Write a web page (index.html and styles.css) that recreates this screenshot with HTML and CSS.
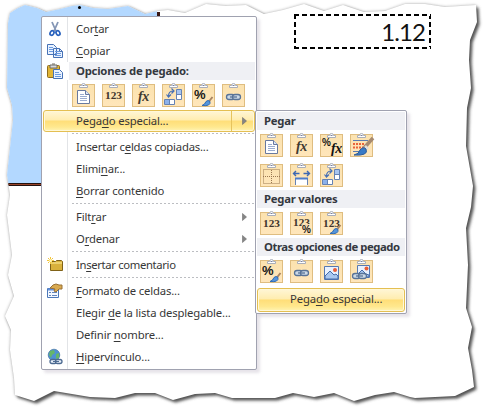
FILE: index.html
```html
<!DOCTYPE html>
<html lang="es">
<head>
<meta charset="utf-8">
<title>Pegado especial</title>
<link rel="stylesheet" href="styles.css">
</head>
<body>
<svg class="defs" width="0" height="0" aria-hidden="true">
  <defs>
    <linearGradient id="tan" x2="0" y2="1"><stop stop-color="#fbe2ae"/><stop offset="1" stop-color="#ffe6bb"/></linearGradient>
    <symbol id="clip" viewBox="0 0 24 24">
      <rect x=".5" y="1.500" width="22" height="22" fill="url(#tan)" stroke="#dfbd80"/>
      <path d="M7.500 4.500v-2h2q0-2 2-2t2 2h2v2z" fill="#fff" stroke="#a9adb9"/>
      <path d="M10.500 2.500h2" stroke="#77809c"/>
    </symbol>
    <symbol id="doc" viewBox="0 0 24 24">
      <path d="M5.500 7.500h8l4 4v9h-12z" fill="#fff" stroke="#68799f"/><path d="M13.500 7.500v4h4" fill="#dce5f6" stroke="#68799f"/>
      <path d="M8 11.500h4M8 13.500h7M8 15.500h7M8 17.500h7" stroke="#9bacd0"/>
    </symbol>
    <symbol id="brush" viewBox="0 0 24 24">
      <path d="M20.500 14l-4 5" stroke="#a98562" stroke-width="2"/><path d="M10 22.500q3-1 4-4 2-2 4 0 1 5-8 4z" fill="#5595dc" stroke="#2f6cb5"/>
    </symbol>
    <symbol id="transpose" viewBox="0 0 24 24">
      <path d="M14.500 6.500h5v10h-5z" fill="#fff" stroke="#6582b4"/><path d="M15 7h4v4h-4z" fill="#a7c4ef"/><path d="M14.500 11.500h5" stroke="#6582b4"/>
      <path d="M2.500 16.500h10v5h-10z" fill="#fff" stroke="#6582b4"/><path d="M3 17h4v4H3z" fill="#8cb1eb"/><path d="M7.500 17v4" stroke="#6582b4"/>
      <path d="M6.500 13q0-5 5-5M4.500 11.500l2 2.500 2.500-2.500M9.500 5.500l2.500 2.500-2.500 2.500" fill="none" stroke="#4770b5" stroke-width="1.200"/>
    </symbol>
    <symbol id="link" viewBox="0 0 24 24">
      <rect x="4.500" y="11.500" width="8" height="5" rx="2.500" fill="#cbd9e7" stroke="#587397" stroke-width="1.300"/>
      <rect x="10.500" y="11.500" width="8" height="5" rx="2.500" fill="#cbd9e7" stroke="#587397" stroke-width="1.300"/><path d="M8 14h7" stroke="#587397" stroke-width="1.300"/>
    </symbol>
    <symbol id="arrow" viewBox="0 0 5 8"><path d="M.5.5L4.500 4 .5 7.500z" fill="#858585" stroke="#6f6f6f" stroke-width=".6"/></symbol>
    <path id="sheet" d="M8 23L10 13 18 8 25 5 37 8 46 12 60 9 72 6 80 5 93 8 108 9 128 6 145 14 158 11 168 10 185 13 206 4 226 6 246 5 264 14 283 10 304 4 324 11 343 5 364 12 385 11 405 4 425 4 445 7 476 5 477 22 470 40 469 60 471 88 467 108 466 146 473 186 471 207 466 228 468 265 466 308 472 327 468 348 472 370 474 387 455 396 415 398 410 397 394 392 375 395 354 401 334 393 314 397 293 393 275 398 232 398 215 393 195 394 173 400 155 393 135 393 115 398 90 397 54 391 34 401 15 395 14 378 10 350 11 330 5 316 14 296 8 275 12 255 7 215 10 195 7 175 13 120 12 105 7 88z"/>
    <clipPath id="torn"><use href="#sheet"/></clipPath>
    <filter id="soft" x="-10%" y="-10%" width="120%" height="120%"><feGaussianBlur stdDeviation="1.800"/></filter>
  </defs>
</svg>
<main class="stage">
  <svg class="paper" viewBox="0 0 484 410" aria-hidden="true">
    <g fill="#555" filter="url(#soft)"><use href="#sheet" x="2.500" y="2.500"/></g>
    <g fill="#555" filter="url(#soft)" opacity=".5"><use href="#sheet"/></g>
    <g clip-path="url(#torn)">
      <path d="M0 0h484v410H0z" fill="#fff"/>
      <path d="M0 0h157v183H0z" fill="#b3d8ff"/>
      <path d="M0 184.500h60" stroke="#24120f" stroke-width="3"/><path d="M0 184.500h60" stroke="#984328"/>
      <path d="M158.500 12v5" stroke="#3a1713" stroke-width="3"/><path d="M6 28v14M6 70v12" stroke="#7c2620" stroke-width="2"/>
      <circle cx="79.500" cy="7.500" r="1.500"/>
    </g>
  </svg>
  <div class="cell">1.12</div>

  <nav class="menu main">
    <div class="item"><svg class="ico" viewBox="0 0 16 16"><path d="M5 1l4 9M11 1L7 10" stroke="#8496b5" stroke-width="1.800"/><ellipse cx="5" cy="12" rx="1.800" ry="2.400" transform="rotate(30 5 12)" fill="none" stroke="#2861bd" stroke-width="1.700"/><ellipse cx="11" cy="12" rx="1.800" ry="2.400" transform="rotate(-30 11 12)" fill="none" stroke="#2861bd" stroke-width="1.700"/></svg><span>Cor<u>t</u>ar</span></div>
    <div class="item"><svg class="ico" viewBox="0 0 16 16"><path d="M.5 1.500h6l3 3v7h-9zM6.500 5.500h6l3 3v6h-9z" fill="#e9f2ff" stroke="#4772b6"/><path d="M2 4.500h4M2 6.500h4M2 8.500h4M8 8.500h4M8 10.500h6M8 12.500h6" stroke="#6a9ae0"/><path d="M12.500 5.500v3h3" fill="none" stroke="#4772b6"/></svg><span><u>C</u>opiar</span></div>
    <div class="head"><svg class="ico" viewBox="0 0 16 16"><rect x=".5" y="2.500" width="12" height="12" rx="1" fill="#e2b536" stroke="#906c1c"/><path d="M3 2h7v3H3zM5 1h3" fill="#d7d9df" stroke="#6e6b61"/><path d="M6.500 6.500h6l3 3v6h-9z" fill="#e9f2ff" stroke="#4772b6"/><path d="M8 9.500h4M8 11.500h6M8 13.500h6" stroke="#6a9ae0"/></svg><span>Opciones de pegado:</span></div>
    <div class="icons">
      <svg><use href="#clip"/><use href="#doc"/></svg>
      <svg><use href="#clip"/><text class="num" x="3" y="16">123</text></svg>
      <svg><use href="#clip"/><text class="fx" x="6" y="18">fx</text></svg>
      <svg><use href="#clip"/><use href="#transpose"/></svg>
      <svg><use href="#clip"/><text class="pct" x="2" y="16">%</text><use href="#brush"/></svg>
      <svg><use href="#clip"/><use href="#link"/></svg>
    </div>
    <div class="item hot split"><span>Pega<u>d</u>o especial...</span><i class="rule"></i><svg class="arr"><use href="#arrow"/></svg></div>
    <hr>
    <div class="item"><span class="wide">Insertar c<u>e</u>ldas copiadas...</span></div>
    <div class="item"><span>Elimi<u>n</u>ar...</span></div>
    <div class="item"><span><u>B</u>orrar contenido</span></div>
    <hr>
    <div class="item"><span>Filt<u>r</u>ar</span><svg class="arr"><use href="#arrow"/></svg></div>
    <div class="item"><span>O<u>r</u>denar</span><svg class="arr"><use href="#arrow"/></svg></div>
    <hr>
    <div class="item"><svg class="ico" viewBox="0 0 16 16"><path d="M3.500 4.500h5l1-1h5l1 1v9h-12z" fill="#d9b13c" stroke="#806218"/><path d="M4 6h11" stroke="#fff0a0"/><path d="M3.500 0v7M0 3.500h7M1 1l5 5M6 1L1 6" stroke="#f1c43d"/><circle cx="3.500" cy="3.500" r="1.500" fill="#fff6b5"/></svg><span class="note">In<u>s</u>ertar comentario</span></div>
    <hr>
    <div class="item"><svg class="ico" viewBox="0 0 16 16"><path d="M.5 5.500h11v9H.5z" fill="#f3f8ff" stroke="#4c78b9"/><path d="M1 6.500h10" stroke="#628fda" stroke-width="2"/><path d="M2 9.500h2M5 9.500h5M2 12.500h2M5 12.500h5" stroke="#6185bd"/><path d="M3 5l3-3 3-1 3 1h3v4h-3l-3 3-2-1 1-2z" fill="#d9aa50" stroke="#987036"/></svg><span><u>F</u>ormato de celdas...</span></div>
    <div class="item"><span>Elegir <u>d</u>e la lista desplegable...</span></div>
    <div class="item"><span>Definir <u>n</u>ombre...</span></div>
    <div class="item"><svg class="ico" viewBox="0 0 16 16"><circle cx="7" cy="6" r="5.800" fill="#4e91d3" stroke="#326697" stroke-width=".6"/><path d="M3 2l4-1 1 3-3 2-1 3-2-3zM9 5l3-1v5l-3 1z" fill="#65b66a"/><rect x="3" y="10.500" width="6.500" height="4" rx="2" fill="#e9f1fa" stroke="#4c6a91" stroke-width="1.300"/><rect x="8.500" y="10.500" width="6.500" height="4" rx="2" fill="#e9f1fa" stroke="#4c6a91" stroke-width="1.300"/><path d="M6 12.500h6" stroke="#4c6a91"/></svg><span><u>H</u>ipervínculo...</span></div>
  </nav>

  <nav class="menu sub">
    <div class="head">Pegar</div>
    <div class="icons">
      <svg><use href="#clip"/><use href="#doc"/></svg>
      <svg><use href="#clip"/><text class="fx" x="6" y="18">fx</text></svg>
      <svg><use href="#clip"/><text class="pct small" x="2" y="13">%</text><text class="fx bold" x="11" y="20">fx</text></svg>
      <svg><use href="#clip"/><path d="M3 7.500h15M3 18.500h8" stroke="#5a7bb0"/><path d="M3 11h12M3 14.500h10" stroke="#e9633a" stroke-width="2" stroke-dasharray="2 1"/><path d="M23 5l-9 10" stroke="#a68a70" stroke-width="3.500"/><path d="M15 13l3 3" stroke="#ddd" stroke-width="2.500"/><path d="M4 22q5-1 6-5 3-4 6-1 3 7-12 6z" fill="#397bc6" stroke="#315d96"/></svg>
    </div>
    <div class="icons">
      <svg><use href="#clip"/><path d="M3.500 6.500h16v14h-16zM11.500 7v14M3 13.500h17" fill="none" stroke="#9a7850" stroke-dasharray="1 1"/></svg>
      <svg><use href="#clip"/><path d="M5.500 22v-6.500h12V22" fill="#fff" stroke="#6582b4"/><path d="M5 15.500h13" stroke="#4e7dcb" stroke-width="2"/><path d="M3.500 10.500h6M13.500 10.500h6M6 8L3.500 10.500 6 13M17 8l2.500 2.500L17 13" fill="none" stroke="#3d68b3" stroke-width="1.400"/></svg>
      <svg><use href="#clip"/><use href="#transpose"/></svg>
    </div>
    <div class="head">Pegar valores</div>
    <div class="icons">
      <svg><use href="#clip"/><text class="num" x="3" y="16">123</text></svg>
      <svg><use href="#clip"/><text class="num" x="3" y="15">123</text><text class="pct small halo" x="12" y="22">%</text></svg>
      <svg><use href="#clip"/><text class="num" x="3" y="16">123</text><use href="#brush"/></svg>
    </div>
    <div class="head tight">Otras opciones de pegado</div>
    <div class="icons">
      <svg><use href="#clip"/><text class="pct" x="2" y="16">%</text><use href="#brush"/></svg>
      <svg><use href="#clip"/><use href="#link"/></svg>
      <svg><use href="#clip"/><path d="M4.500 7.500h14v13h-14z" fill="#e8f1ff" stroke="#5679b1"/><path d="M5 17l5-5 4 4 2-1 2 2v3H5z" fill="#a9c7ef" stroke="#456ba9"/><circle cx="15" cy="11" r="2" fill="#e85d37"/></svg>
      <svg><use href="#clip"/><path d="M7.500 6.500h12v12h-12z" fill="#e8f1ff" stroke="#5679b1"/><path d="M8 15l4-4 4 4 3 1v2H8z" fill="#a9c7ef" stroke="#456ba9"/><circle cx="16.500" cy="9.500" r="2" fill="#e85d37"/><use href="#link" x="-2" y="3"/></svg>
    </div>
    <div class="item hot"><span>Pega<u>d</u>o especial...</span></div>
  </nav>
</main>
</body>
</html>
```

FILE: styles.css
```css
* { box-sizing: border-box; }
html, body { margin: 0; width: 484px; height: 410px; overflow: hidden; background: #fff; }
.defs { position: absolute; }
.stage { position: relative; width: 484px; height: 410px; font: 11.3px/20px "Noto Sans", "Open Sans", sans-serif; letter-spacing: -.15px; color: #373737; }
.paper { display: block; width: 484px; height: 410px; }
.cell { position: absolute; left: 294px; top: 14px; width: 137px; height: 35px; padding-right: 6px; text-align: right; font: 24px/35px Lato, sans-serif; letter-spacing: -.9px; color: #111;
  background:
    repeating-linear-gradient(90deg, #000 0 5px, #fff 5px 8px) 0 0 / 100% 2px no-repeat,
    repeating-linear-gradient(90deg, #000 0 5px, #fff 5px 8px) 0 100% / 100% 2px no-repeat,
    repeating-linear-gradient(#000 0 5px, #fff 5px 8px) 0 0 / 2px 100% no-repeat,
    repeating-linear-gradient(#000 0 5px, #fff 5px 8px) 100% 0 / 2px 100% no-repeat; }
.menu { position: absolute; background: #fff; border: 1px solid #a0a2b0; border-radius: 2px; padding: 1px; box-shadow: 3px 3px 3px #c9c4d077; white-space: nowrap; }
.main { left: 41px; top: 16px; width: 216px; height: 354px; background: linear-gradient(#e2e4e7, #e2e4e7) 25px 0 / 1px 100% no-repeat #fff; }
.sub { left: 255px; top: 110px; width: 152px; height: 204px; }
.item, .head { display: grid; grid-template-columns: 33px 1fr auto auto; align-items: center; height: 22px; }
.item > span, .head > span { grid-column: 2; grid-row: 1; }
.item .wide { letter-spacing: -.2px; }
.item .note { letter-spacing: -.35px; }
.item u { text-decoration-thickness: 1px; text-underline-offset: 2px; }
.ico { grid-column: 1; grid-row: 1; width: 16px; height: 16px; margin-left: 4px; overflow: visible; }
.head { height: 18px; font-weight: 700; line-height: 18px; letter-spacing: -.23px; color: #34383f; background: #eff0f4; }
.head.tight { letter-spacing: -.43px; }
.main .head { background: linear-gradient(90deg, #fff 26px, #eff0f4 26px); }
.sub .head { display: block; padding-left: 7px; }
.icons { display: flex; gap: 6px; height: 30px; padding: 3px 0 0 29px; }
.sub .icons { padding-left: 3px; }
.icons svg { width: 24px; height: 24px; flex: none; overflow: visible; letter-spacing: 0; }
hr { height: 4px; margin: 0 0 0 29px; border: 0; background: repeating-linear-gradient(90deg, #bcbec2 0 2px, #fff 2px 4px) 0 1px / 100% 1px no-repeat; }
.arr { grid-column: 4; grid-row: 1; width: 5px; height: 8px; margin-right: 8px; }
.rule { grid-column: 3; grid-row: 1; width: 1px; height: 20px; margin-right: 10px; background: #e6c35d; }
.hot { border: 1px solid #e4bf52; border-radius: 3px; background: linear-gradient(#fff6d6, #ffedb0 45%, #ffde78 50%, #ffe88e 80%, #fff4b5); box-shadow: inset 0 0 0 1px #fff8d8; }
.main .hot { grid-template-columns: 32px 1fr auto auto; }
.main .hot .arr { margin-right: 7px; }
.sub .hot { display: block; height: 24px; margin-top: 2px; padding-left: 32px; line-height: 20px; }
.num { font: 700 11.300px "Liberation Serif", serif; fill: #40342c; }
.fx { font: italic 700 14px "Liberation Serif", serif; letter-spacing: -.5px; fill: #3f3930; }
.bold { fill: #111; }
.pct { font: 700 13px "Liberation Sans", sans-serif; fill: #171717; }
.small { font-size: 10px; }
.halo { paint-order: stroke; stroke: #ffe6bb; stroke-width: 2px; }
```
